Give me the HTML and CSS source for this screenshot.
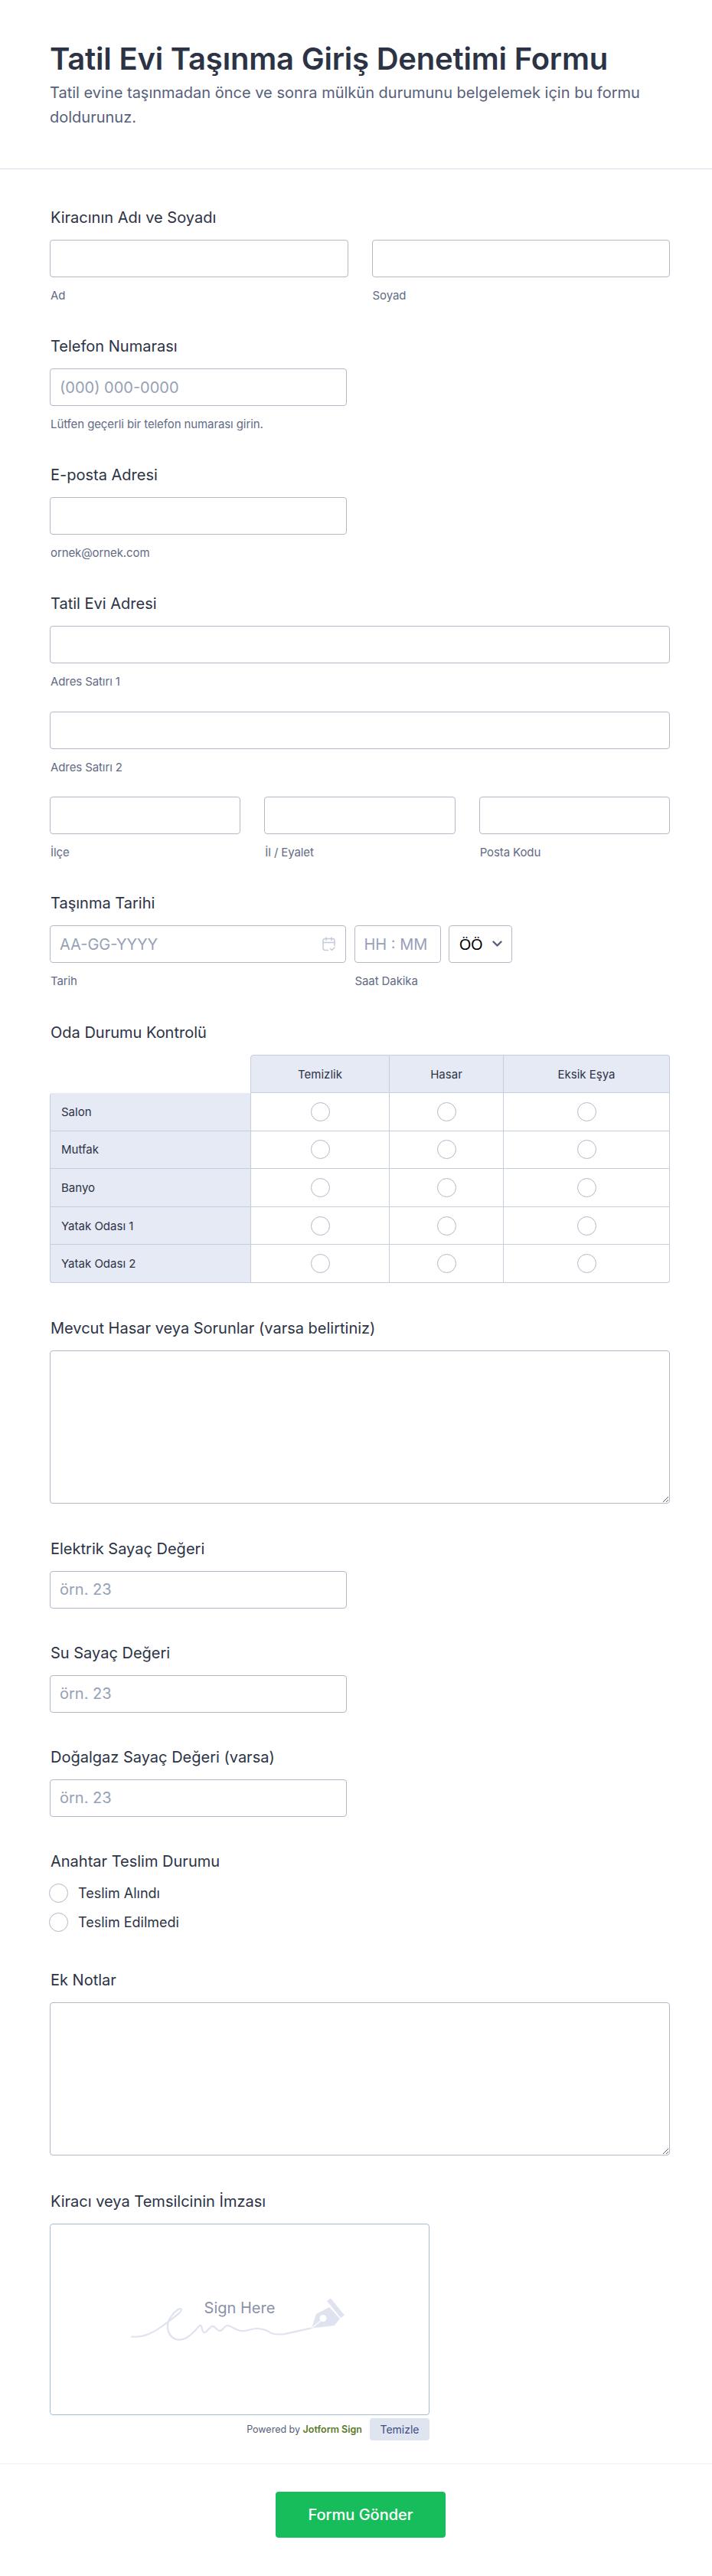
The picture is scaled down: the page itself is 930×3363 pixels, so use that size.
FILE: index.html
```html
<!DOCTYPE html>
<html lang="tr">
<head>
<meta charset="utf-8">
<title>Tatil Evi Taşınma Giriş Denetimi Formu</title>
<link rel="stylesheet" href="styles.css">
</head>
<body>
<form class="form">
  <header class="head">
    <h1 class="title">Tatil Evi Taşınma Giriş Denetimi Formu</h1>
    <p class="subtitle">Tatil evine taşınmadan önce ve sonra mülkün durumunu belgelemek için bu formu doldurunuz.</p>
  </header>
  <div class="body">
    <div class="field">
      <label class="label">Kiracının Adı ve Soyadı</label>
      <div class="cols two">
        <div><input class="input" type="text"><div class="sub">Ad</div></div>
        <div><input class="input" type="text"><div class="sub">Soyad</div></div>
      </div>
    </div>
    <div class="field">
      <label class="label">Telefon Numarası</label>
      <input class="input short" type="text" placeholder="(000) 000-0000">
      <div class="sub">Lütfen geçerli bir telefon numarası girin.</div>
    </div>
    <div class="field">
      <label class="label">E-posta Adresi</label>
      <input class="input short" type="text">
      <div class="sub">ornek@ornek.com</div>
    </div>
    <div class="field">
      <label class="label">Tatil Evi Adresi</label>
      <input class="input" type="text"><div class="sub">Adres Satırı 1</div>
      <input class="input line" type="text"><div class="sub">Adres Satırı 2</div>
      <div class="cols three line">
        <div><input class="input" type="text"><div class="sub">İlçe</div></div>
        <div><input class="input" type="text"><div class="sub">İl / Eyalet</div></div>
        <div><input class="input" type="text"><div class="sub">Posta Kodu</div></div>
      </div>
    </div>
    <div class="field date-field">
      <label class="label">Taşınma Tarihi</label>
      <div class="datetime">
        <div class="date-col">
          <div class="date-wrap">
            <input class="input" type="text" placeholder="AA-GG-YYYY">
            <svg class="cal" width="17" height="19" viewBox="0 0 17 19" fill="none" stroke="#c3cad8" stroke-width="1.5" stroke-linecap="round" stroke-linejoin="round"><path d="M7.500 17.500H3.500a2.500 2.500 0 0 1-2.500-2.500V5a2.500 2.500 0 0 1 2.500-2.500h10A2.500 2.500 0 0 1 16 5v6.500"/><path d="M1 7.500h15M5 1v3.500M12 1v3.500"/><path d="M10.500 15.500l2 2 3.500-3.500"/></svg>
          </div>
          <div class="sub">Tarih</div>
        </div>
        <div class="time-col">
          <div class="time-row">
            <input class="input time" type="text" placeholder="HH : MM">
            <div class="ampm">
              <select class="select"><option>ÖÖ</option><option>ÖS</option></select>
              <svg class="chev" width="13" height="8" viewBox="0 0 13 8" fill="none" stroke="#57607a" stroke-width="2.400" stroke-linecap="round" stroke-linejoin="round"><path d="M1.500 1.500l5 5 5-5"/></svg>
            </div>
          </div>
          <div class="sub">Saat Dakika</div>
        </div>
      </div>
    </div>
    <div class="field wide-gap">
      <label class="label">Oda Durumu Kontrolü</label>
      <table class="matrix">
        <colgroup><col class="c0"><col class="c1"><col class="c2"><col class="c3"></colgroup>
        <thead>
          <tr><td class="blank"></td><th class="h1">Temizlik</th><th>Hasar</th><th class="hlast">Eksik Eşya</th></tr>
        </thead>
        <tbody>
          <tr><th class="room first">Salon</th><td><span class="radio"></span></td><td><span class="radio"></span></td><td><span class="radio"></span></td></tr>
          <tr><th class="room">Mutfak</th><td><span class="radio"></span></td><td><span class="radio"></span></td><td><span class="radio"></span></td></tr>
          <tr><th class="room">Banyo</th><td><span class="radio"></span></td><td><span class="radio"></span></td><td><span class="radio"></span></td></tr>
          <tr><th class="room">Yatak Odası 1</th><td><span class="radio"></span></td><td><span class="radio"></span></td><td><span class="radio"></span></td></tr>
          <tr><th class="room last">Yatak Odası 2</th><td><span class="radio"></span></td><td><span class="radio"></span></td><td><span class="radio"></span></td></tr>
        </tbody>
      </table>
    </div>
    <div class="field wide-gap">
      <label class="label">Mevcut Hasar veya Sorunlar (varsa belirtiniz)</label>
      <textarea class="area"></textarea>
    </div>
    <div class="field meter">
      <label class="label">Elektrik Sayaç Değeri</label>
      <input class="input short" type="text" placeholder="örn. 23">
    </div>
    <div class="field meter">
      <label class="label">Su Sayaç Değeri</label>
      <input class="input short" type="text" placeholder="örn. 23">
    </div>
    <div class="field meter">
      <label class="label">Doğalgaz Sayaç Değeri (varsa)</label>
      <input class="input short" type="text" placeholder="örn. 23">
    </div>
    <div class="field keys">
      <label class="label">Anahtar Teslim Durumu</label>
      <div class="options">
        <div class="option"><span class="radio"></span>Teslim Alındı</div>
        <div class="option"><span class="radio"></span>Teslim Edilmedi</div>
      </div>
    </div>
    <div class="field notes">
      <label class="label">Ek Notlar</label>
      <textarea class="area"></textarea>
    </div>
    <div class="field sign">
      <label class="label">Kiracı veya Temsilcinin İmzası</label>
      <div class="pad">
        <span class="sign-here">Sign Here</span>
        <svg class="scribble" width="320" height="90" viewBox="0 0 320 90" fill="none">
          <path d="M22 70.500C35 72 50 66 63 56C75 47 88 38 87 35C86 32 79 36 73 45C66 55 68 70 80 74C92 77 101 67 110 57C114 52 113 62 116 65C119 67 123 58 127 57C131 56 133 63 137 63C141 63 143 56 147 56C152 56 157 62 165 63C172 64 178 60 184 60C190 60 196 61 201 64C206 68 214 68 222 67C232 65 245 62 256 59.500" stroke="#dfe3ef" stroke-width="2.200" stroke-linecap="round"/>
          <path d="M257 59.500L263 41L280 32L294 47L287 56Z" fill="#dfe3ef"/>
          <path d="M277 24L282 20.500L300 42.500L295 46Z" fill="#dfe3ef"/>
          <circle cx="272" cy="46.500" r="4.500" fill="#fff"/>
          <path d="M258 58.500L270 49" stroke="#fff" stroke-width="1.200"/>
        </svg>
      </div>
      <div class="pad-foot">
        <span class="powered">Powered by <b>Jotform Sign</b></span>
        <button class="clear" type="button">Temizle</button>
      </div>
    </div>
  </div>
  <footer class="foot">
    <button class="submit" type="button">Formu Gönder</button>
  </footer>
</form>
</body>
</html>
```
FILE: styles.css
```css
* { box-sizing: border-box; }
html, body { margin: 0; padding: 0; background: #fff; }
body { font-family: Inter, "Noto Sans", sans-serif; color: #2c3345; }
.form { width: 930px; height: 3363px; overflow: hidden; }

.head { height: 221px; padding: 52px 65px 0; border-bottom: 1px solid #d7dcea; }
.title { margin: 0; font-size: 40px; line-height: 50px; font-weight: 600; letter-spacing: -0.2px; color: #2c3345; }
.subtitle { margin: 3px 0 0; font-size: 20px; line-height: 32px; color: #57607a; }

.body { padding: 52px 55px 0 65px; }
.field { margin-bottom: 45px; }
.date-field { margin-bottom: 46px; }
.wide-gap { margin-bottom: 48px; }
.meter { margin-bottom: 47px; }
.keys { margin-bottom: 52px; }
.notes { margin-bottom: 49px; }
.label { display: block; height: 22px; line-height: 22px; margin: 0 0 18px 1px; font-size: 20px; font-weight: 400; color: #2c3345; }
.input { display: block; width: 100%; height: 49px; padding: 0 12px; border: 1px solid #b3b9c7; border-radius: 4px; background: #fff; font: 400 20px Inter, sans-serif; color: #2c3345; outline: none; }
.input::placeholder { color: #95a1b6; opacity: 1; }
.input.short { width: 387.500px; }
.sub { height: 20px; line-height: 20px; margin: 14px 0 0 1px; font-size: 15px; letter-spacing: -0.1px; color: #626b85; }
.line { margin-top: 28.500px; }
.cols { display: grid; }
.cols.two { grid-template-columns: 1fr 1fr; column-gap: 31px; }
.cols.three { grid-template-columns: 1fr 1fr 1fr; column-gap: 31px; }

.datetime { display: flex; gap: 11px; }
.date-col { width: 386.500px; }
.date-wrap { position: relative; }
.cal { position: absolute; right: 14px; top: 15px; }
.time-row { display: flex; gap: 10.500px; }
.input.time { width: 113px; }
.ampm { position: relative; width: 82.500px; height: 49px; }
.select { width: 100%; height: 100%; padding: 0 0 0 13px; appearance: none; -webkit-appearance: none; border: 1px solid #b3b9c7; border-radius: 4px; background: #fff; font: 400 19.500px "Liberation Sans", Arial, sans-serif; color: #000; }
.chev { position: absolute; right: 13px; top: 20px; }

.matrix { width: 810px; border-collapse: separate; border-spacing: 0; table-layout: fixed; font-size: 15px; }
.c0 { width: 262px; }
.c1 { width: 182px; }
.c2 { width: 149px; }
.c3 { width: 217px; }
.matrix thead th { height: 50px; padding: 0; background: #e6eaf5; border-top: 1px solid #c6cddc; border-right: 1px solid #c6cddc; border-bottom: 1px solid #c6cddc; font-weight: 400; color: #2c3345; text-align: center; }
.matrix .h1 { border-left: 1px solid #c6cddc; border-top-left-radius: 4px; }
.matrix .hlast { border-top-right-radius: 4px; }
.matrix .blank { border: 0; padding: 0; }
.matrix .room { height: 49.600px; padding: 0 0 0 14px; text-align: left; font-weight: 400; background: #e6eaf5; border-left: 1px solid #c6cddc; border-bottom: 1px solid #c6cddc; color: #2c3345; }
.matrix .first { border-top-left-radius: 4px; }
.matrix .last { border-bottom-left-radius: 4px; }
.matrix tbody td { padding: 0; text-align: center; vertical-align: middle; border-right: 1px solid #c6cddc; border-bottom: 1px solid #c6cddc; }
.matrix tbody td:nth-child(2) { border-left: 1px solid #c6cddc; }
.matrix tbody tr:last-child td:last-child { border-bottom-right-radius: 4px; }
.radio { display: inline-block; flex: none; width: 25px; height: 25px; border: 1px solid #b3b9c7; border-radius: 50%; background: #fff; vertical-align: middle; }

.area { display: block; width: 100%; height: 200px; padding: 10px 12px; border: 1px solid #b3b9c7; border-radius: 4px; background: #fff; font: 400 16px Inter, sans-serif; outline: none; resize: vertical; }

.options { display: flex; flex-direction: column; gap: 13px; margin-left: -1px; }
.option { display: flex; align-items: center; gap: 13px; height: 25px; font-size: 18px; color: #2c3345; }

.pad { position: relative; width: 496px; height: 250px; border: 1px solid #a8bbd8; border-radius: 4px; background: #fff; }
.sign-here { position: absolute; left: 0; right: 0; top: 97px; text-align: center; font-size: 20px; line-height: 24px; font-weight: 400; color: #8a93a8; }
.scribble { position: absolute; left: 84px; top: 76px; }
.pad-foot { display: flex; justify-content: flex-end; align-items: center; gap: 10px; width: 496px; margin-top: 4px; }
.powered { font-size: 12.500px; color: #57607a; }
.powered b { font-weight: 600; color: #5a7a2a; }
.clear { width: 78px; height: 29px; padding: 0; border: 0; border-radius: 4px; background: #dfe4f1; font: 400 14px Inter, sans-serif; color: #3e4e85; }

.sign { margin-bottom: 30px; }
.foot { display: flex; justify-content: center; padding: 36px 0 0 12px; border-top: 1px solid #eef0f6; }
.submit { width: 222px; height: 60px; padding: 0; border: 0; border-radius: 4px; background: #18bd5b; font: 500 20px Inter, sans-serif; color: #fff; }
```
